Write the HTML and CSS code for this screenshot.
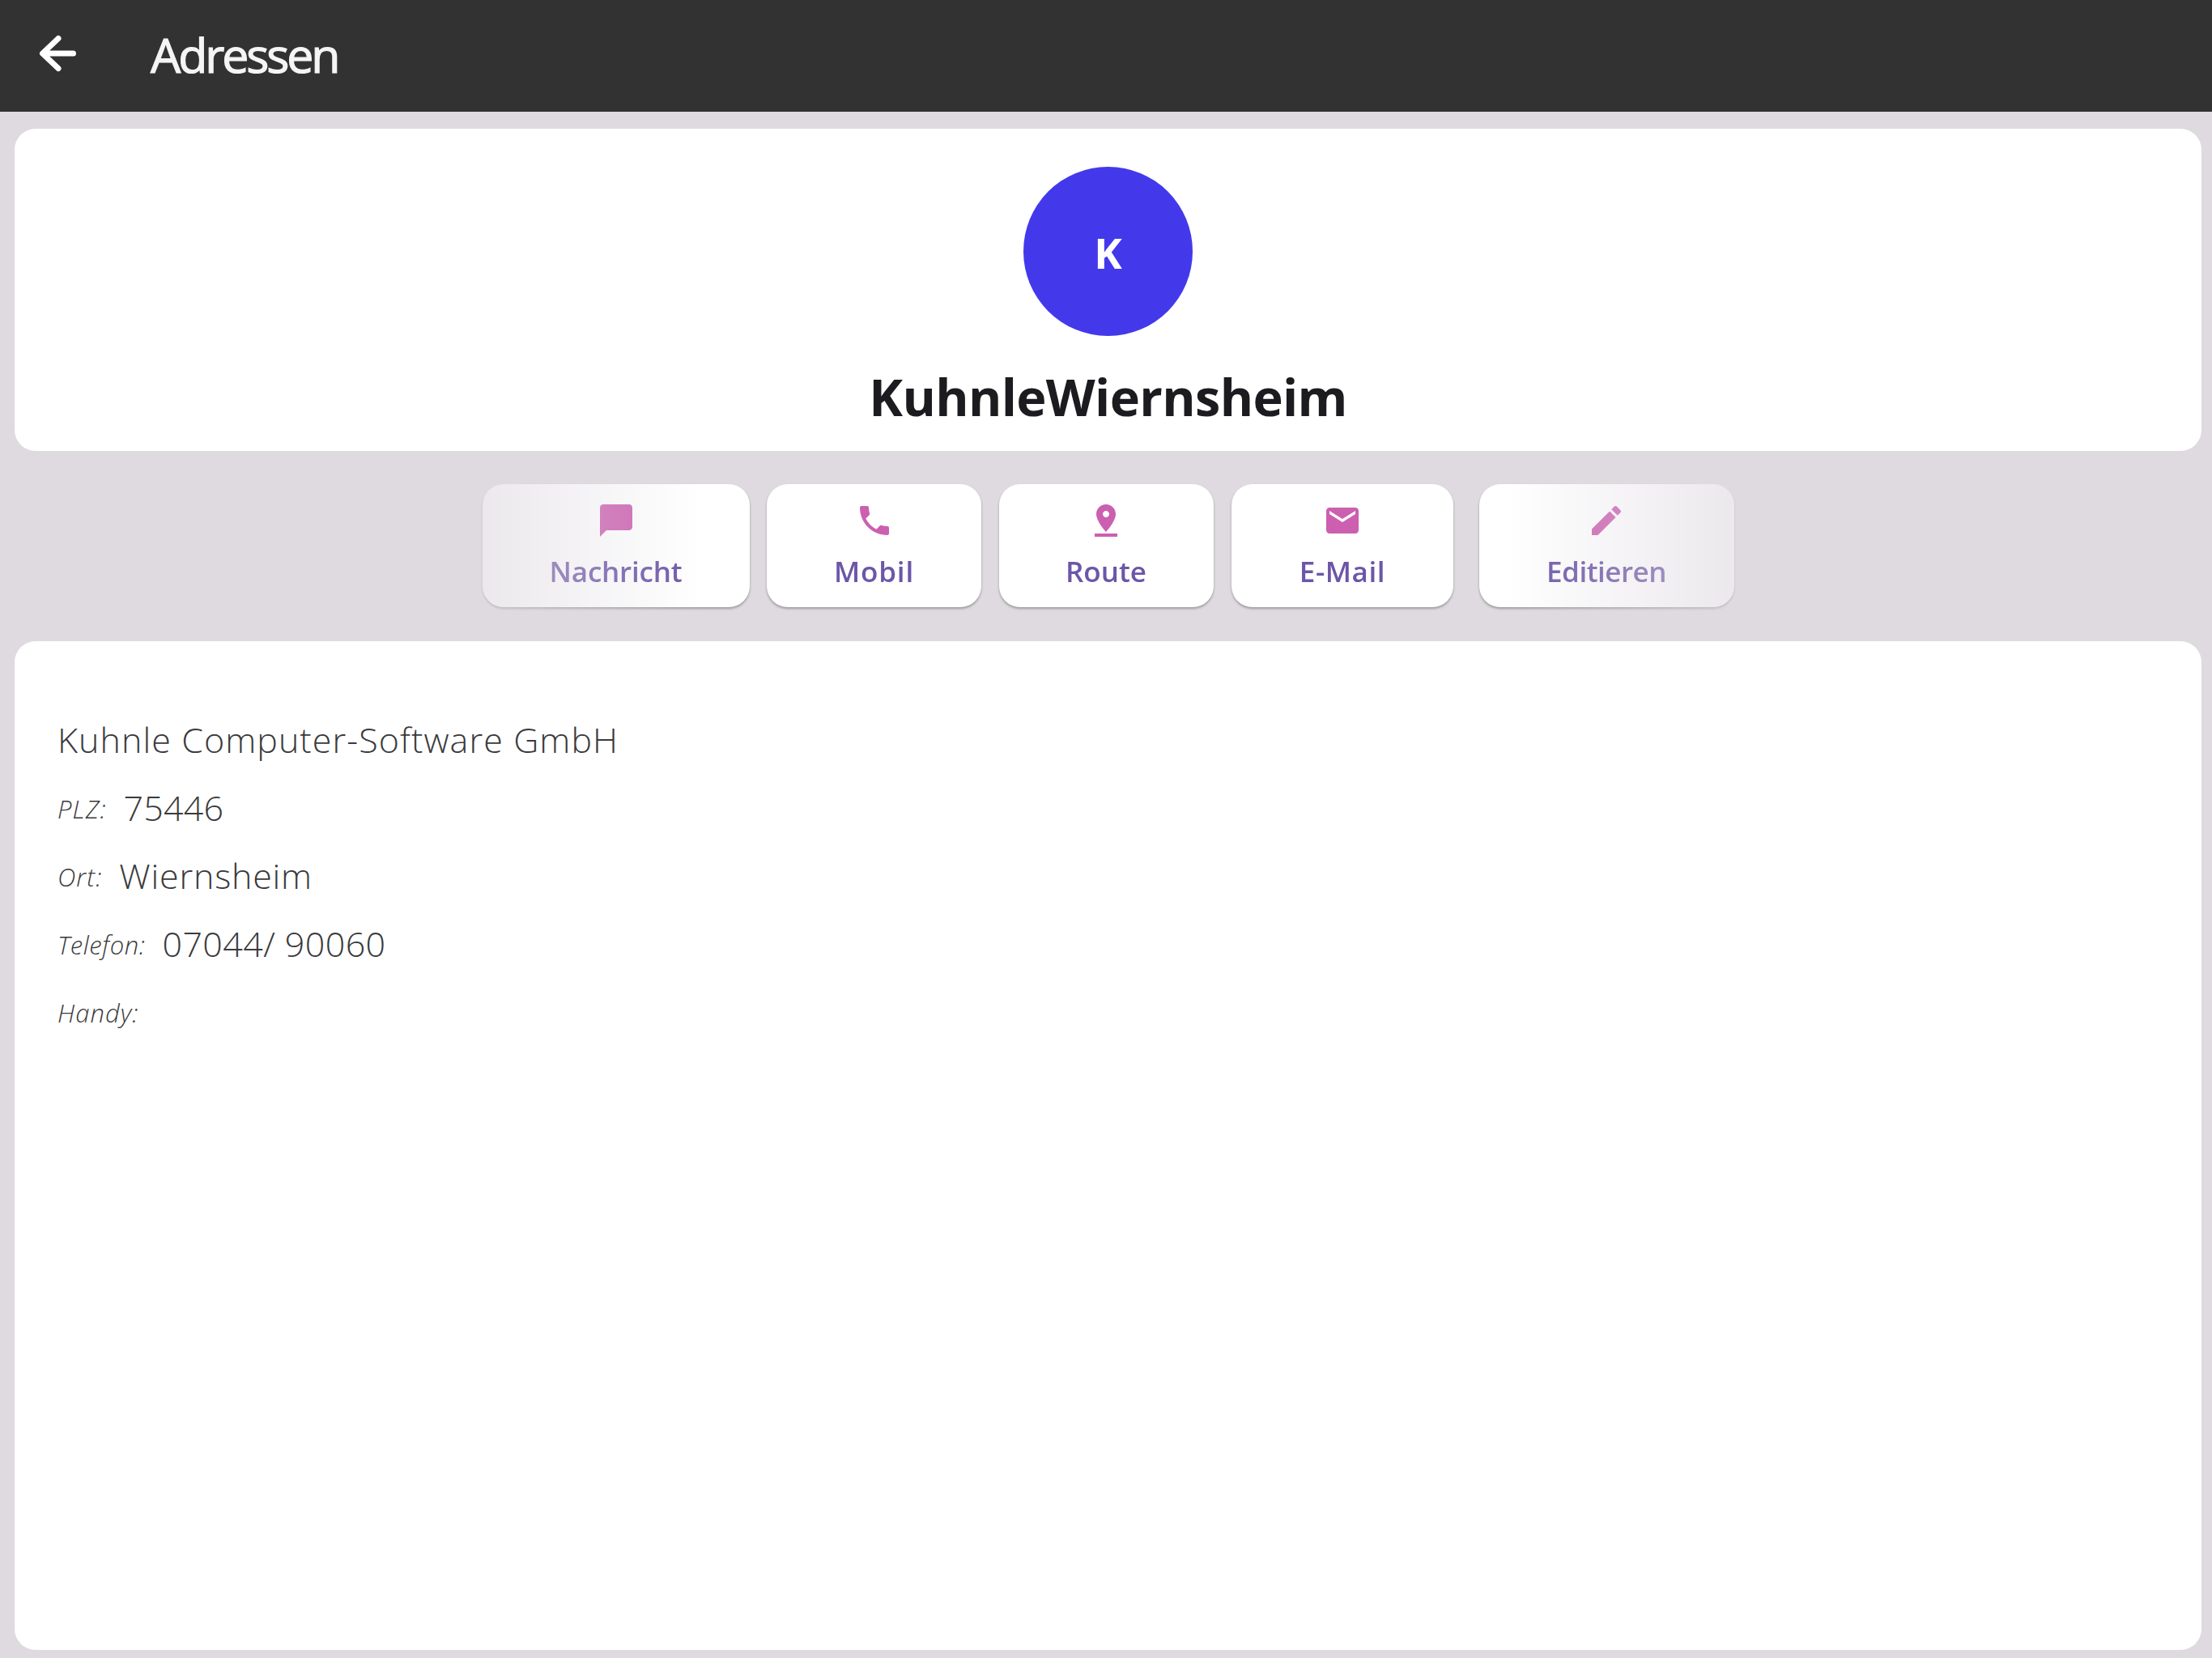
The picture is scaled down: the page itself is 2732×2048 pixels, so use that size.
FILE: index.html
```html
<!DOCTYPE html>
<html lang="de">
<head>
    <meta charset="UTF-8">
    <meta name="viewport" content="width=device-width, initial-scale=1.0">
    <title>Adressen</title>
    <link rel="stylesheet" href="styles.css">
</head>
<body>
    <header class="topbar">
        <svg class="back" viewBox="0 0 48 48">
            <path d="M25 5.500L5.500 24L25 42.500M6 24H43.500"/>
        </svg>
        <span class="title">Adressen</span>
    </header>
    <main>
        <section class="card profile">
            <div class="avatar">K</div>
            <h1 class="name">KuhnleWiernsheim</h1>
        </section>
        <nav class="actions">
            <button class="action message">
                <svg viewBox="0 0 24 24"><path d="M20 2H4c-1.100 0-1.990.900-1.990 2L2 22l4-4h14c1.100 0 2-.900 2-2V4c0-1.100-.900-2-2-2z"/></svg>
                <span>Nachricht</span>
            </button>
            <button class="action mobile">
                <svg viewBox="0 0 24 24"><path d="M6.620 10.790c1.440 2.830 3.760 5.140 6.590 6.590l2.200-2.200c.270-.270.670-.360 1.020-.240 1.120.370 2.330.570 3.570.570.550 0 1 .450 1 1V20c0 .550-.450 1-1 1-9.390 0-17-7.610-17-17 0-.550.450-1 1-1h3.500c.550 0 1 .450 1 1 0 1.250.200 2.450.570 3.570.110.350.030.740-.250 1.020l-2.200 2.200z"/></svg>
                <span>Mobil</span>
            </button>
            <button class="action route">
                <svg viewBox="0 0 24 24"><path d="M18 8c0-3.310-2.690-6-6-6S6 4.690 6 8c0 4.500 6 11 6 11s6-6.500 6-11zm-8 0c0-1.100.900-2 2-2s2 .900 2 2-.890 2-2 2c-1.100 0-2-.900-2-2zM5 20v2h14v-2H5z"/></svg>
                <span>Route</span>
            </button>
            <button class="action mail">
                <svg viewBox="0 0 24 24"><path d="M20 4H4c-1.100 0-1.990.900-1.990 2L2 18c0 1.100.900 2 2 2h16c1.100 0 2-.900 2-2V6c0-1.100-.900-2-2-2zm0 4l-8 5-8-5V6l8 5 8-5v2z"/></svg>
                <span>E-Mail</span>
            </button>
            <button class="action edit">
                <svg viewBox="0 0 24 24"><path d="M3 17.250V21h3.750L17.810 9.940l-3.750-3.750L3 17.250zM20.710 7.040c.390-.390.390-1.020 0-1.410l-2.340-2.340c-.390-.390-1.020-.390-1.410 0l-1.830 1.830 3.750 3.750 1.830-1.830z"/></svg>
                <span>Editieren</span>
            </button>
        </nav>
        <section class="card details">
            <div class="row"><span class="value company">Kuhnle Computer-Software GmbH</span></div>
            <div class="row"><span class="label">PLZ:</span><span class="value zip">75446</span></div>
            <div class="row"><span class="label">Ort:</span><span class="value city">Wiernsheim</span></div>
            <div class="row"><span class="label telefon">Telefon:</span><span class="value phone">07044/ 90060</span></div>
            <div class="row"><span class="label">Handy:</span></div>
        </section>
    </main>
</body>
</html>
```
FILE: styles.css
```css
* {
    box-sizing: border-box;
    font-family: "Open Sans", "Noto Sans", sans-serif;
}

body {
    margin: 0;
    height: 100vh;
    display: flex;
    flex-direction: column;
    background: #dfdae0;
    overflow: hidden;
}

.topbar {
    height: 137.5px;
    padding: 0 0 6px 47px;
    display: flex;
    align-items: center;
    gap: 91px;
    background: #323232;
}

.back {
    width: 48px;
    height: 48px;
    fill: none;
    stroke: #fff;
    stroke-width: 7;
    stroke-linecap: round;
    stroke-linejoin: round;
}

.title {
    padding-top: 2px;
    color: #f5f5f5;
    font-size: 59px;
    font-weight: 400;
    line-height: 80px;
    letter-spacing: -3.100px;
    -webkit-text-stroke: 1.200px #f5f5f5;
}

main {
    flex: 1;
    display: flex;
    flex-direction: column;
    padding: 21.500px 13px 10px 18px;
}

.card {
    background: #fff;
    border-radius: 26px;
}

.profile {
    height: 398px;
    padding-top: 47px;
    display: flex;
    flex-direction: column;
    align-items: center;
}

.avatar {
    width: 209px;
    height: 209px;
    border-radius: 50%;
    background: #4339eb;
    color: #fff;
    font-size: 52px;
    font-weight: 700;
    line-height: 212px;
    text-align: center;
}

.name {
    margin: 31px 0 0;
    color: #1c1b1f;
    font-size: 63px;
    font-weight: 700;
    line-height: 88px;
    letter-spacing: -.650px;
}

/* row fades out towards both ends */
.actions {
    height: 235px;
    width: 1566px;
    margin: 0 auto;
    padding: 41px 10px 0;
    display: flex;
    gap: 21.500px;
    -webkit-mask-image: linear-gradient(to right, rgba(0, 0, 0, .4) 10px, #000 284px, #000 1270px, rgba(0, 0, 0, .4) 1556px);
    mask-image: linear-gradient(to right, rgba(0, 0, 0, .4) 10px, #000 284px, #000 1270px, rgba(0, 0, 0, .4) 1556px);
}

.action {
    height: 152px;
    padding: 21px 0 0;
    display: flex;
    flex-direction: column;
    align-items: center;
    gap: 14px;
    flex: none;
    border: none;
    border-radius: 26px;
    background: #fff;
    color: #6c56a8;
    font-size: 35px;
    font-weight: 600;
    line-height: 50px;
    box-shadow: 0 2px 3px rgba(0, 0, 0, .3);
}

.action svg {
    width: 48px;
    height: 48px;
    fill: #cc5fb0;
}

.message {
    width: 330px;
    letter-spacing: -.200px;
}

.mobile, .route {
    width: 265px;
}

.mobile {
    letter-spacing: .800px;
}

.mail {
    width: 274px;
    margin-left: 1px;
    letter-spacing: .600px;
}

.edit {
    width: 315px;
    margin-left: 10px;
    letter-spacing: -.500px;
}

.details {
    flex: 1;
    padding: 81px 53px;
    color: #3a3a3c;
}

.row {
    height: 84px;
    display: flex;
    align-items: center;
    gap: 21px;
}

.value {
    padding-bottom: 3px;
    font-size: 43px;
    font-weight: 300;
}

.company {
    letter-spacing: 1.070px;
}

.zip {
    letter-spacing: .200px;
}

.city {
    letter-spacing: .800px;
}

.phone {
    letter-spacing: .400px;
}

.label {
    font-size: 31px;
    font-weight: 300;
    font-style: italic;
    letter-spacing: 1.100px;
}

.telefon {
    letter-spacing: .600px;
}
```
